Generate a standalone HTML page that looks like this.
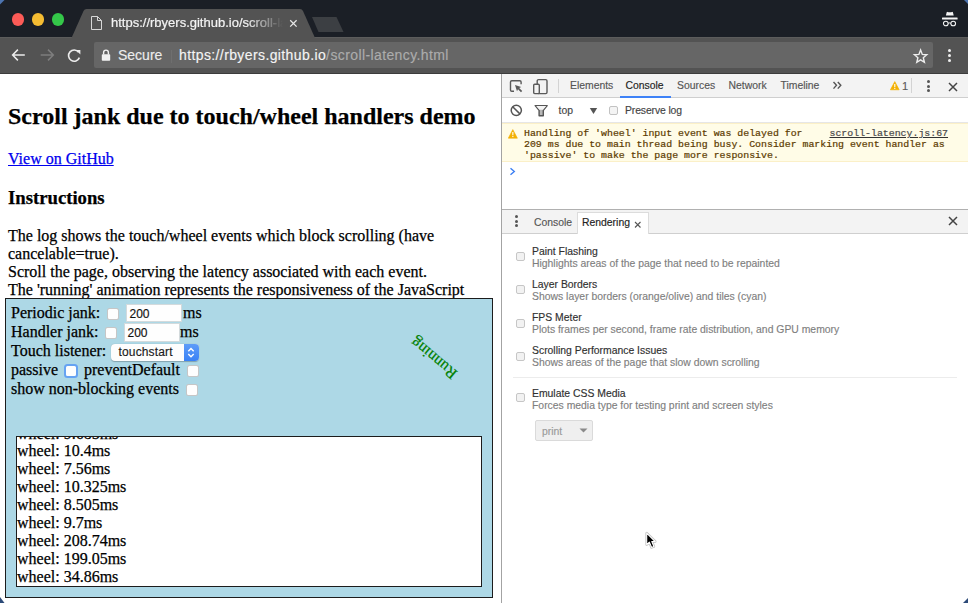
<!DOCTYPE html>
<html><head><meta charset="utf-8">
<style>
*{box-sizing:border-box}
html,body{margin:0;padding:0;width:968px;height:603px;overflow:hidden;background:#fff}
body{position:relative;font-family:"Liberation Sans",sans-serif}
.a{position:absolute}
.t{position:absolute;white-space:pre;line-height:normal}
.serif{font-family:"Liberation Serif",serif;font-size:16px;color:#000;-webkit-text-stroke-width:0.25px}
.dt{font-family:"Liberation Sans",sans-serif;font-size:10.4px;color:#555;-webkit-text-stroke-width:0.15px}
.mono{font-family:"Liberation Mono",monospace;font-size:9.9px;color:#5c3b00;-webkit-text-stroke:0.2px #5c3b00}
</style></head><body>

<!-- ===== Title bar ===== -->
<div class="a" style="left:0;top:0;width:968px;height:37px;background:#1b1f26"></div>
<div class="a" style="left:11.8px;top:13.3px;width:12.4px;height:12.4px;border-radius:50%;background:#fc5b57"></div>
<div class="a" style="left:31.8px;top:13.3px;width:12.4px;height:12.4px;border-radius:50%;background:#f5bc32"></div>
<div class="a" style="left:51.8px;top:13.3px;width:12.4px;height:12.4px;border-radius:50%;background:#34c749"></div>

<!-- toolbar bg -->
<div class="a" style="left:0;top:37px;width:968px;height:37px;background:#535353;border-top:1px solid #5c5c5c;border-bottom:1px solid #3c3c3c"></div>
<!-- tab -->
<svg class="a" style="left:0;top:0" width="968" height="40">
  <path d="M71.5 38 L83.5 11 Q84.5 9 86.5 9 L300 9 Q302 9 303 11 L315 38 Z" fill="#535353"/>
  <path d="M312 17 L336.5 17 L343.5 32 L318.5 32 Z" fill="#3c3f43"/>
</svg>
<!-- doc icon -->
<svg class="a" style="left:90px;top:15px" width="13" height="16">
  <path d="M1.5 1.5 H7.5 L11.5 5.5 V14.5 H1.5 Z M7.5 1.5 V5.5 H11.5" fill="none" stroke="#d8d8d8" stroke-width="1"/>
</svg>
<div class="t" style="left:111px;top:15px;font-size:13px;color:#f4f4f4;-webkit-text-stroke:0.2px #f4f4f4;width:172px;overflow:hidden;-webkit-mask-image:linear-gradient(to right,#000 135px,transparent 172px)">https://rbyers.github.io/scroll-latency.html</div>
<svg class="a" style="left:289px;top:19px" width="9" height="9">
  <path d="M1.2 1.2 L7.6 7.6 M7.6 1.2 L1.2 7.6" stroke="#e8e8e8" stroke-width="1.25"/>
</svg>
<!-- incognito -->
<svg class="a" style="left:940px;top:9px" width="20" height="20">
  <path d="M5.9 6.4 L6.7 3.3 Q6.9 2.7 7.5 2.9 Q9.8 3.5 12.1 2.9 Q12.7 2.7 12.9 3.3 L13.7 6.4 Z" fill="#f4f4f4"/>
  <rect x="2" y="8.5" width="15.6" height="2.1" rx="0.5" fill="#f4f4f4"/>
  <circle cx="5.8" cy="14.5" r="2.35" fill="none" stroke="#f4f4f4" stroke-width="1.05"/>
  <circle cx="13.2" cy="14.5" r="2.35" fill="none" stroke="#f4f4f4" stroke-width="1.05"/>
  <path d="M8.2 14.3 Q9.5 13.5 10.8 14.3" fill="none" stroke="#f4f4f4" stroke-width="1"/>
</svg>

<!-- ===== Toolbar ===== -->
<!-- back -->
<svg class="a" style="left:10px;top:47px" width="18" height="16">
  <path d="M14.8 8 H2.6 M7.9 2.6 L2.6 8 L7.9 13.4" fill="none" stroke="#ececec" stroke-width="1.5"/>
</svg>
<!-- forward -->
<svg class="a" style="left:37.5px;top:47px" width="18" height="16">
  <path d="M2.7 8 H15.3 M10 2.6 L15.3 8 L10 13.4" fill="none" stroke="#7e7e7e" stroke-width="1.5"/>
</svg>
<!-- reload -->
<svg class="a" style="left:66px;top:48px" width="17" height="16">
  <path d="M12.6 4.2 A5.6 5.6 0 1 0 13.4 9.6" fill="none" stroke="#ececec" stroke-width="1.6"/>
  <path d="M10 2 L14.4 2 L14.4 6.4 Z" fill="#ececec"/>
</svg>
<!-- omnibox -->
<div class="a" style="left:94px;top:42px;width:839px;height:26px;background:#666666;border-radius:2px"></div>
<!-- lock -->
<svg class="a" style="left:100px;top:48px" width="12" height="14">
  <path d="M3.6 6.5 V4.5 A2.4 2.4 0 0 1 8.4 4.5 V6.5" fill="none" stroke="#f2f2f2" stroke-width="1.4"/>
  <rect x="1.8" y="6.2" width="8.4" height="6.6" rx="0.8" fill="#f2f2f2"/>
</svg>
<div class="t" style="left:118px;top:47px;font-size:14px;color:#ececec;-webkit-text-stroke:0.15px #ececec">Secure</div>
<div class="a" style="left:171px;top:50px;width:1px;height:13px;background:#6f6f6f"></div>
<div class="t" style="left:179px;top:47px;font-size:14px;letter-spacing:0.39px;color:#f4f4f4;-webkit-text-stroke:0.15px #f4f4f4">https://rbyers.github.io<span style="color:#acacac;-webkit-text-stroke:0.15px #acacac">/scroll-latency.html</span></div>
<!-- star -->
<svg class="a" style="left:912px;top:47.5px" width="17" height="17">
  <path d="M8.6 2 L10.3 6.4 L14.8 6.7 L11.3 9.7 L12.4 14.3 L8.6 11.8 L4.8 14.3 L5.9 9.7 L2.4 6.7 L6.9 6.4 Z" fill="none" stroke="#eeeeee" stroke-width="1.4" stroke-linejoin="miter"/>
</svg>
<!-- menu dots -->
<div class="a" style="left:948px;top:48.7px;width:3px;height:3px;border-radius:50%;background:#efefef"></div>
<div class="a" style="left:948px;top:53.7px;width:3px;height:3px;border-radius:50%;background:#efefef"></div>
<div class="a" style="left:948px;top:58.7px;width:3px;height:3px;border-radius:50%;background:#efefef"></div>

<!-- ===== Page ===== -->
<div class="a" style="left:0;top:74px;width:501px;height:529px;background:#fff;overflow:hidden" id="page">
</div>
<div class="t serif" style="left:8px;top:103px;font-size:24px;font-weight:bold">Scroll jank due to touch/wheel handlers demo</div>
<div class="t serif" style="left:8px;top:150px;color:#0000ee;text-decoration:underline">View on GitHub</div>
<div class="t serif" style="left:8px;top:187px;font-size:18.72px;font-weight:bold">Instructions</div>
<div class="t serif" style="left:8px;top:227px">The log shows the touch/wheel events which block scrolling (have</div>
<div class="t serif" style="left:8px;top:245px">cancelable=true).</div>
<div class="t serif" style="left:8px;top:263px">Scroll the page, observing the latency associated with each event.</div>
<div class="t serif" style="left:8px;top:281px">The 'running' animation represents the responsiveness of the JavaScript</div>

<!-- blue box -->
<div class="a" style="left:5px;top:298px;width:488px;height:300px;background:#add8e6;border:1px solid #1c1c1c;overflow:hidden">
</div>
<div class="t serif" style="left:11px;top:304px">Periodic jank:</div>
<div class="t serif" style="left:11px;top:323px">Handler jank:</div>
<div class="t serif" style="left:11px;top:342px">Touch listener:</div>
<div class="t serif" style="left:11px;top:361px">passive</div>
<div class="t serif" style="left:84px;top:361px">preventDefault</div>
<div class="t serif" style="left:11px;top:380px">show non-blocking events</div>
<div class="t serif" style="left:183px;top:304px">ms</div>
<div class="t serif" style="left:180px;top:323px">ms</div>

<!-- checkboxes -->
<div class="a" style="left:107px;top:308.3px;width:12px;height:11.6px;border-radius:2.5px;background:#fefefe;border:0.6px solid rgba(0,0,0,0.22)"></div>
<div class="a" style="left:105.3px;top:327px;width:11.8px;height:11.7px;border-radius:2.5px;background:#fefefe;border:0.6px solid rgba(0,0,0,0.22)"></div>
<div class="a" style="left:64.2px;top:364px;width:14px;height:13.9px;border-radius:3.5px;background:#fefefe;border:2.2px solid #66a3f2"></div>
<div class="a" style="left:187px;top:365.2px;width:11.6px;height:11.6px;border-radius:2.5px;background:#fefefe;border:0.6px solid rgba(0,0,0,0.22)"></div>
<div class="a" style="left:186.4px;top:384.3px;width:11.8px;height:11.5px;border-radius:2.5px;background:#fefefe;border:0.6px solid rgba(0,0,0,0.22)"></div>
<!-- inputs -->
<div class="a" style="left:126px;top:304px;width:56px;height:18px;background:#fefefe;border:1px solid #d3dadc"></div>
<div class="t" style="left:129.5px;top:307px;font-size:12px;color:#111;-webkit-text-stroke-width:0.15px">200</div>
<div class="a" style="left:124px;top:323.4px;width:55.5px;height:18.3px;background:#fefefe;border:1px solid #d3dadc"></div>
<div class="t" style="left:127.5px;top:326px;font-size:12px;color:#111;-webkit-text-stroke-width:0.15px">200</div>
<!-- select -->
<div class="a" style="left:111px;top:343.5px;width:87.5px;height:17px;background:#fdfdfd;border-radius:4px;overflow:hidden;box-shadow:0 0.5px 1px rgba(0,0,0,0.25)">
  <div class="a" style="left:73px;top:0;width:14.5px;height:17px;background:linear-gradient(#5d9cf8,#3a82f6)"></div>
  <svg class="a" style="left:75px;top:2px" width="10" height="13"><path d="M2.3 5.2 L5 2.5 L7.7 5.2 M2.3 8 L5 10.7 L7.7 8" fill="none" stroke="#fff" stroke-width="1.4"/></svg>
</div>
<div class="t" style="left:118.5px;top:345px;font-size:12px;color:#1a1a1a;letter-spacing:0.15px;-webkit-text-stroke-width:0.15px">touchstart</div>

<!-- Running -->
<div class="t" style="left:409px;top:350px;width:52px;height:18px;font-family:'Liberation Serif',serif;font-size:16px;color:#008000;-webkit-text-stroke-width:0.2px;transform:rotate(220deg);transform-origin:26px 9px">Running</div>

<!-- log box -->
<div class="a" style="left:16px;top:436px;width:466px;height:151px;background:#fff;border:1px solid #1c1c1c;overflow:hidden">
  <div class="t serif" style="left:0px;top:-12px">wheel: 9.685ms</div>
  <div class="t serif" style="left:0px;top:5px">wheel: 10.4ms</div>
  <div class="t serif" style="left:0px;top:23px">wheel: 7.56ms</div>
  <div class="t serif" style="left:0px;top:41px">wheel: 10.325ms</div>
  <div class="t serif" style="left:0px;top:59px">wheel: 8.505ms</div>
  <div class="t serif" style="left:0px;top:77px">wheel: 9.7ms</div>
  <div class="t serif" style="left:0px;top:95px">wheel: 208.74ms</div>
  <div class="t serif" style="left:0px;top:113px">wheel: 199.05ms</div>
  <div class="t serif" style="left:0px;top:131px">wheel: 34.86ms</div>
</div>

<!-- ===== DevTools ===== -->
<div class="a" style="left:501px;top:74px;width:467px;height:529px;background:#fff;border-left:1px solid #a3a3a3"></div>
<!-- main toolbar -->
<div class="a" style="left:502px;top:74px;width:466px;height:24px;background:#f3f3f3;border-bottom:1px solid #cfcfcf"></div>
<svg class="a" style="left:508px;top:78px" width="17" height="16">
  <path d="M6 13.3 H3.8 Q2.5 13.3 2.5 12 V4 Q2.5 2.7 3.8 2.7 H11.8 Q13.1 2.7 13.1 4 V6.2" fill="none" stroke="#5a5a5a" stroke-width="1.4"/>
  <path d="M7 7 L13.2 9 L11.2 10 L14.2 13 L13 14.2 L10 11.2 L9 13.2 Z" fill="#5a5a5a"/>
</svg>
<svg class="a" style="left:532px;top:78px" width="17" height="17">
  <rect x="5.2" y="1.6" width="9.8" height="14" rx="1.3" fill="none" stroke="#5a5a5a" stroke-width="1.4"/>
  <rect x="1.7" y="6.2" width="5.6" height="9.4" rx="1" fill="#f3f3f3" stroke="#5a5a5a" stroke-width="1.4"/>
</svg>
<div class="a" style="left:558px;top:79px;width:1px;height:14px;background:#d3d3d3"></div>
<div class="t dt" style="left:570px;top:80px">Elements</div>
<div class="t dt" style="left:625.5px;top:80px;color:#222">Console</div>
<div class="a" style="left:620px;top:95.5px;width:51px;height:2px;background:#3e82f7"></div>
<div class="t dt" style="left:677px;top:80px">Sources</div>
<div class="t dt" style="left:728.5px;top:80px">Network</div>
<div class="t dt" style="left:780.5px;top:80px">Timeline</div>
<svg class="a" style="left:832px;top:81px" width="11" height="9">
  <path d="M1.5 1 L4.5 4.3 L1.5 7.6 M5.8 1 L8.8 4.3 L5.8 7.6" fill="none" stroke="#555" stroke-width="1.4"/>
</svg>
<svg class="a" style="left:889.5px;top:81px" width="11" height="10">
  <path d="M4.8 0.6 L9.2 8.8 L0.4 8.8 Z" fill="#f3b000" stroke="#f3b000" stroke-width="0.6" stroke-linejoin="round"/>
  <rect x="4.25" y="3" width="1.1" height="3.2" fill="#fff"/>
  <rect x="4.25" y="6.9" width="1.1" height="1.1" fill="#fff"/>
</svg>
<div class="t dt" style="left:902px;top:80px;font-size:11px;color:#5c5c5c">1</div>
<div class="a" style="left:911px;top:78px;width:1px;height:15px;background:#d3d3d3"></div>
<div class="a" style="left:926.6px;top:79.7px;width:3px;height:3px;border-radius:50%;background:#555"></div>
<div class="a" style="left:926.6px;top:84.5px;width:3px;height:3px;border-radius:50%;background:#555"></div>
<div class="a" style="left:926.6px;top:89.4px;width:3px;height:3px;border-radius:50%;background:#555"></div>
<svg class="a" style="left:948px;top:81.5px" width="10" height="10">
  <path d="M1 1 L9 9 M9 1 L1 9" stroke="#444" stroke-width="1.5"/>
</svg>

<!-- console toolbar -->
<div class="a" style="left:502px;top:98px;width:466px;height:25px;background:#fff;border-bottom:1px solid #e6e6e6"></div>
<svg class="a" style="left:509px;top:103px" width="15" height="15">
  <circle cx="7.3" cy="7.3" r="5.1" fill="none" stroke="#555" stroke-width="1.5"/>
  <path d="M3.7 3.7 L10.9 10.9" stroke="#555" stroke-width="1.5"/>
</svg>
<svg class="a" style="left:534px;top:104px" width="15" height="13">
  <path d="M1.2 1.6 H13.2 L9.3 6.4 V11.8 H5.1 V6.4 Z" fill="#b8b8b8" stroke="#555" stroke-width="1.4" stroke-linejoin="round"/>
  <path d="M2.2 2 H12.2 L9 5.8 H5.4 Z" fill="#f4f4f4"/>
</svg>
<div class="t dt" style="left:558.5px;top:105px;color:#444">top</div>
<svg class="a" style="left:589px;top:107px" width="9" height="8"><path d="M0.8 1 H8.2 L4.5 7 Z" fill="#555"/></svg>
<div class="a" style="left:609px;top:105.5px;width:9px;height:9px;border:1px solid #c2c2c2;border-radius:2px;background:#f4f4f4"></div>
<div class="t dt" style="left:625px;top:105px;letter-spacing:-0.12px;color:#444">Preserve log</div>

<!-- warning -->
<div class="a" style="left:502px;top:123px;width:466px;height:39px;background:#fffce7;border-top:1px solid #fbf0c8;border-bottom:1px solid #fbf0c8"></div>
<svg class="a" style="left:507.5px;top:128.5px" width="10" height="10">
  <path d="M4.8 0.6 L9.4 9.2 L0.3 9.2 Z" fill="#f3b000" stroke="#f3b000" stroke-width="0.6" stroke-linejoin="round"/>
  <rect x="4.3" y="3" width="1.1" height="3.3" fill="#fff"/>
  <rect x="4.3" y="7" width="1.1" height="1.1" fill="#fff"/>
</svg>
<div class="t mono" style="left:524px;top:128px">Handling of 'wheel' input event was delayed for</div>
<div class="t mono" style="left:524px;top:139px">209 ms due to main thread being busy. Consider marking event handler as</div>
<div class="t mono" style="left:524px;top:150px">'passive' to make the page more responsive.</div>
<div class="t mono" style="left:829.5px;top:128px;color:#4a4a4a;-webkit-text-stroke:0.2px #4a4a4a;text-decoration:underline;text-decoration-color:#333">scroll-latency.js:67</div>
<svg class="a" style="left:509px;top:167px" width="8" height="9"><path d="M1.5 1.2 L5.3 4.5 L1.5 7.8" fill="none" stroke="#3b7ff3" stroke-width="1.4"/></svg>

<!-- drawer -->
<div class="a" style="left:502px;top:209px;width:466px;height:25px;background:#f3f3f3;border-top:1px solid #b0b0b0;border-bottom:1px solid #cfcfcf"></div>
<div class="a" style="left:514.6px;top:215px;width:3px;height:3px;border-radius:50%;background:#555"></div>
<div class="a" style="left:514.6px;top:219.5px;width:3px;height:3px;border-radius:50%;background:#555"></div>
<div class="a" style="left:514.6px;top:224.2px;width:3px;height:3px;border-radius:50%;background:#555"></div>
<div class="t dt" style="left:534px;top:217px">Console</div>
<div class="a" style="left:577px;top:212px;width:72px;height:22px;background:#fff;border:1px solid #dcdcdc;border-bottom:none"></div>
<div class="t dt" style="left:582px;top:217px;color:#222">Rendering</div>
<svg class="a" style="left:633.5px;top:220.5px" width="8" height="8"><path d="M1 1 L6.5 6.5 M6.5 1 L1 6.5" stroke="#555" stroke-width="1.1"/></svg>
<svg class="a" style="left:948px;top:216px" width="10" height="10">
  <path d="M1 1 L9 9 M9 1 L1 9" stroke="#444" stroke-width="1.5"/>
</svg>

<!-- rendering panel -->
<div class="a" style="left:516px;top:252px;width:9px;height:9px;border:1px solid #c6c6c6;border-radius:2px;background:#f2f2f2"></div>
<div class="t dt" style="left:532px;top:246px;color:#303030">Paint Flashing</div>
<div class="t dt" style="left:532px;top:257.5px;color:#7f7f7f">Highlights areas of the page that need to be repainted</div>

<div class="a" style="left:516px;top:285px;width:9px;height:9px;border:1px solid #c6c6c6;border-radius:2px;background:#f2f2f2"></div>
<div class="t dt" style="left:532px;top:279px;color:#303030">Layer Borders</div>
<div class="t dt" style="left:532px;top:290.5px;color:#7f7f7f">Shows layer borders (orange/olive) and tiles (cyan)</div>

<div class="a" style="left:516px;top:318.5px;width:9px;height:9px;border:1px solid #c6c6c6;border-radius:2px;background:#f2f2f2"></div>
<div class="t dt" style="left:532px;top:311.5px;color:#303030">FPS Meter</div>
<div class="t dt" style="left:532px;top:324px;color:#7f7f7f">Plots frames per second, frame rate distribution, and GPU memory</div>

<div class="a" style="left:516px;top:351.5px;width:9px;height:9px;border:1px solid #c6c6c6;border-radius:2px;background:#f2f2f2"></div>
<div class="t dt" style="left:532px;top:345px;color:#303030">Scrolling Performance Issues</div>
<div class="t dt" style="left:532px;top:357px;color:#7f7f7f">Shows areas of the page that slow down scrolling</div>

<div class="a" style="left:513px;top:377px;width:444px;height:1px;background:#ececec"></div>

<div class="a" style="left:516px;top:393px;width:9px;height:9px;border:1px solid #c6c6c6;border-radius:2px;background:#f2f2f2"></div>
<div class="t dt" style="left:532px;top:387.5px;color:#303030">Emulate CSS Media</div>
<div class="t dt" style="left:532px;top:400px;color:#7f7f7f">Forces media type for testing print and screen styles</div>

<div class="a" style="left:535px;top:420px;width:58px;height:21px;background:#efefef;border:1px solid #dadada;border-radius:2px"></div>
<div class="t dt" style="left:542px;top:426px;color:#9a9a9a">print</div>
<svg class="a" style="left:578.5px;top:427.5px" width="9" height="5"><path d="M0.5 0.5 H8.5 L4.5 4.5 Z" fill="#8a8a8a"/></svg>

<!-- cursor -->
<svg class="a" style="left:643px;top:530px" width="16" height="21">
  <path d="M3.7 3.2 L3.7 14.6 L6.4 12.1 L8.6 17.4 L10.9 16.5 L8.8 11.5 L12.2 11.5 Z" fill="none" stroke="rgba(0,0,0,0.25)" stroke-width="2.6" stroke-linejoin="round"/>
  <path d="M3.7 3.2 L3.7 14.6 L6.4 12.1 L8.6 17.4 L10.9 16.5 L8.8 11.5 L12.2 11.5 Z" fill="#000" stroke="#fff" stroke-width="1.1" stroke-linejoin="round"/>
</svg>

<!-- window corners -->
<svg class="a" style="left:0;top:0" width="968" height="603">
  <path d="M0 0 H4.5 L0 4.5 Z" fill="#4d74b0"/>
  <path d="M964 0 H968 V4 Z" fill="#4d74b0"/>
  <path d="M0 597 L4.5 603 H0 Z" fill="#2c4a78"/>
  <path d="M968 598 V603 H963 Z" fill="#2c4a78"/>
</svg>
</body></html>
